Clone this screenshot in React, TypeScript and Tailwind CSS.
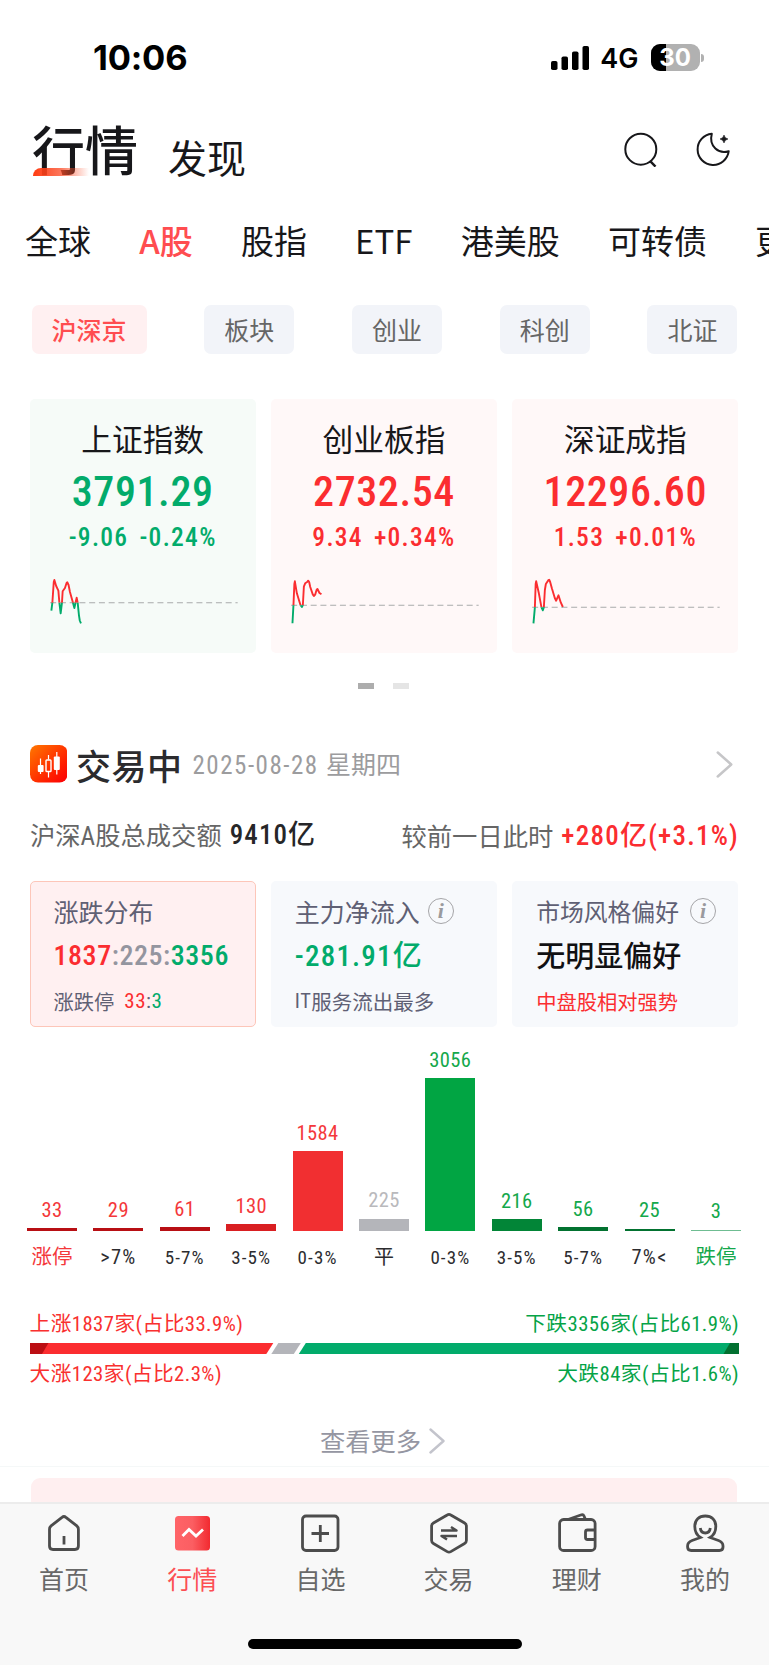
import React from 'react';
import clsx from 'clsx';

type Tone = 'up' | 'down';

const cjk = "font-['Noto_Sans_CJK_SC',sans-serif]";
const num = "font-['Roboto','Noto_Sans_CJK_SC',sans-serif] [font-stretch:87.5%]";

const marketTabs = ['全球', 'A股', '股指', 'ETF', '港美股', '可转债', '更多'];

const boards = ['沪深京', '板块', '创业', '科创', '北证'];

const indices: { name: string; value: string; change: string; percent: string; tone: Tone; base: number; points: string }[] = [
  {
    name: '上证指数',
    value: '3791.29',
    change: '-9.06',
    percent: '-0.24%',
    tone: 'down',
    base: 27.7,
    points:
      '21.2,35.7 22.2,27.7 23.6,7 24.2,5 26,11 28.2,15.7 29.2,27.7 30.5,38.3 31.8,27.7 32.5,16.3 34.8,13 36.4,8 37.2,7.3 38.4,10 39.8,17 42.8,27.7 44.2,33 46.5,22.7 47.5,27.7 48.8,40.3 49.6,45.5 50.8,48.3',
  },
  {
    name: '创业板指',
    value: '2732.54',
    change: '9.34',
    percent: '+0.34%',
    tone: 'up',
    base: 30.3,
    points:
      '21.3,48.3 22.3,30 23.2,9 23.7,6.3 25.7,18.3 29.3,30 30.7,32 31.7,30 32.7,11.7 34,8.3 36,7 37,5.7 38,7 39,11.7 41.6,19.4 42.7,21 44,19.6 45.4,15 46.3,14 48.3,18 50.3,19.3',
  },
  {
    name: '深证成指',
    value: '12296.60',
    change: '1.53',
    percent: '+0.01%',
    tone: 'up',
    base: 32.3,
    points:
      '21.3,48.3 22.7,32.7 23.5,9 24,6.3 26.7,18.3 29.3,32.3 30.7,35.3 31.7,32.3 32.7,15 33.7,9 36,5.4 37,4.7 38,7 39.7,13.3 42.7,23.3 44,25.7 46.3,20.3 48.7,27.7 50.7,32',
  },
];

const rangeLabel = 'text-[#2c2c2f] text-[19px] tracking-[1.1px]';
const edgeLabel = 'text-[#2c2c2f] text-[20.5px] tracking-[1.3px]';

const bars = [
  { count: 33, label: '涨停', height: 2.5, bar: 'bg-[#b80f14]', text: 'text-[#f4383b]', axis: 'text-[#f4383b] text-[20.5px]' },
  { count: 29, label: '>7%', height: 2.5, bar: 'bg-[#b80f14]', text: 'text-[#f4383b]', axis: edgeLabel },
  { count: 61, label: '5-7%', height: 3.5, bar: 'bg-[#b80f14]', text: 'text-[#f4383b]', axis: rangeLabel },
  { count: 130, label: '3-5%', height: 6.5, bar: 'bg-[#d91f22]', text: 'text-[#f4383b]', axis: rangeLabel },
  { count: 1584, label: '0-3%', height: 79.5, bar: 'bg-[#f12f31]', text: 'text-[#f4383b]', axis: rangeLabel },
  { count: 225, label: '平', height: 12, bar: 'bg-[#b4b5ba]', text: 'text-[#b9b9bc]', axis: 'text-[#2c2c2f] text-[20px]' },
  { count: 3056, label: '0-3%', height: 152.5, bar: 'bg-[#01a543]', text: 'text-[#14a84b]', axis: rangeLabel },
  { count: 216, label: '3-5%', height: 11.5, bar: 'bg-[#028537]', text: 'text-[#14a84b]', axis: rangeLabel },
  { count: 56, label: '5-7%', height: 3.5, bar: 'bg-[#027230]', text: 'text-[#14a84b]', axis: rangeLabel },
  { count: 25, label: '7%<', height: 1.8, bar: 'bg-[#027230]', text: 'text-[#14a84b]', axis: edgeLabel },
  { count: 3, label: '跌停', height: 1, bar: 'bg-[#6fbd92]', text: 'text-[#14a84b]', axis: 'text-[#14a84b] text-[20.5px]' },
];

const Sparkline: React.FC<{ id: string; base: number; points: string }> = ({ id, base, points }) => (
  <svg className="block w-full h-[52px]" viewBox="0 0 226 52" fill="none" strokeLinejoin="round">
    <clipPath id={`${id}-up`}>
      <rect x="0" y="0" width="226" height={base} />
    </clipPath>
    <clipPath id={`${id}-down`}>
      <rect x="0" y={base} width="226" height={52 - base} />
    </clipPath>
    <line x1="20" x2="207.5" y1={base} y2={base} stroke="#a9aaab" strokeWidth="1.1" strokeDasharray="6 3.75" />
    <polyline points={points} stroke="#fb2d30" strokeWidth="1.9" clipPath={`url(#${id}-up)`} />
    <polyline points={points} stroke="#02ab6b" strokeWidth="1.9" clipPath={`url(#${id}-down)`} />
  </svg>
);

const Chevron: React.FC<{ className?: string }> = ({ className }) => (
  <svg className={className} viewBox="0 0 16 26" fill="none" stroke="currentColor" strokeWidth="2.4" strokeLinecap="round" strokeLinejoin="round">
    <path d="M1.5 1.5 L14.5 13 L1.5 24.5" />
  </svg>
);

const InfoIcon: React.FC = () => (
  <span className="flex h-[26px] w-[26px] shrink-0 items-center justify-center rounded-full border-[1.3px] border-[#a5a5a8] font-['Liberation_Serif',serif] text-[22px] font-bold italic leading-none text-[#9a9a9e]">
    i
  </span>
);

const HomeIcon = () => (
  <>
    <path d="M6.5 17.2c0-1.4.6-2.4 1.6-3.3L19 5.3c1.2-1 2.7-1 3.9 0l10.9 8.6c1 .9 1.6 1.9 1.6 3.3V34c0 2.2-1.3 3.5-3.5 3.5H10c-2.2 0-3.5-1.3-3.5-3.5z" />
    <path d="M21 24v8.5" />
  </>
);

const QuotesIcon = () => (
  <>
    <defs>
      <linearGradient id="quotes" x1="0" x2="1" y1="0" y2="0">
        <stop offset="0" stopColor="#ff6468" />
        <stop offset=".5" stopColor="#fb5e62" />
        <stop offset="1" stopColor="#f22a30" />
      </linearGradient>
    </defs>
    <rect x="4" y="4" width="35" height="34.5" rx="3.5" fill="url(#quotes)" stroke="none" />
    <path d="M11.5 24 L18 17.5 L25 24 L32 17.5" stroke="#fff" />
  </>
);

const WatchIcon = () => (
  <>
    <rect x="3.5" y="4" width="35.5" height="34.5" rx="3.5" />
    <path d="M21.3 13v17M12.5 21.5h17.5" />
  </>
);

const TradeIcon = () => (
  <>
    <path d="M19.2 3 Q21 1.8 22.8 3 L36.6 11 Q38.4 12 38.4 14 V28.5 Q38.4 30.5 36.6 31.5 L22.8 39.6 Q21 40.6 19.2 39.6 L5.4 31.5 Q3.6 30.5 3.6 28.5 V14 Q3.6 12 5.4 11 Z" />
    <path d="M13 18.5H28.5L23 15M29 24H13.5L19 27.5" strokeLinejoin="round" strokeWidth="2.5" />
  </>
);

const WalletIcon = () => (
  <>
    <rect x="3.6" y="7.5" width="35.5" height="31" rx="4" />
    <path d="M12 7.5 L25.5 2.8 Q27.3 2.3 28 4 L29.5 7.5" />
    <path d="M39 18H31.5Q29.5 18 29.5 20V25.5Q29.5 27.5 31.5 27.5H39" />
  </>
);

const ProfileIcon = () => (
  <>
    <path d="M16.5 25.5C12.5 23 10.8 19.5 10.8 14.5 10.8 8 15 4 21.3 4S31.8 8 31.8 14.5C31.8 19.5 30.1 23 26.1 25.5L34.5 28.5C37.5 29.6 39 31.4 39 34V35C39 37.3 37.6 38.5 35.4 38.5H7.2C5 38.5 3.6 37.3 3.6 35V34C3.6 31.4 5.1 29.6 8.1 28.5Z" />
    <path d="M16.3 16c.4 3.3 2.2 5 5 5s4.6-1.7 5-5" />
  </>
);

const navItems = [
  { label: '首页', icon: HomeIcon },
  { label: '行情', icon: QuotesIcon, active: true },
  { label: '自选', icon: WatchIcon },
  { label: '交易', icon: TradeIcon },
  { label: '理财', icon: WalletIcon },
  { label: '我的', icon: ProfileIcon },
];

const StatusBar: React.FC = () => (
  <div className="flex h-[112px] items-center justify-between pl-[93px] pr-[65px] pt-[3px] font-['Inter',sans-serif]">
    <span className="mt-px text-[34.5px] font-bold leading-none tracking-[-0.2px] text-black">10:06</span>
    <div className="flex items-center text-black">
      <svg className="h-6 w-[39px]" viewBox="0 0 39 24" fill="currentColor">
        <rect x="0" y="15" width="6.5" height="9" rx="1.8" />
        <rect x="10.5" y="10.5" width="6.5" height="13.5" rx="1.8" />
        <rect x="21" y="5.5" width="6.5" height="18.5" rx="1.8" />
        <rect x="31.5" y="0" width="6.5" height="24" rx="1.8" />
      </svg>
      <span className="ml-[10px] mt-[2px] text-[27px] font-semibold leading-none">4G</span>
      <div className="relative ml-[12px] flex h-[27px] w-[49px] items-center justify-center overflow-hidden rounded-[9px] bg-[#b1b1b1]">
        <div className="absolute inset-y-0 left-0 w-[15px] bg-black" />
        <span className="relative text-[24px] font-bold leading-none text-white">30</span>
      </div>
      <div className="ml-[1.5px] h-2 w-[3px] rounded-r-full bg-[#b1b1b1]" />
    </div>
  </div>
);

const Header: React.FC = () => (
  <div className="flex h-[75px] items-start justify-between pl-[32px] pr-[38px]">
    <div className="flex items-end text-[#17171a]">
      <h1 className="relative text-[53px] font-medium leading-[73px]">
        行情
        <span className="absolute bottom-[9px] left-px h-2 w-[56px] rounded-tl-[8px] bg-gradient-to-r from-[#ff3b10] via-[#fb4a25]/75 to-[#ff5a36]/0" />
      </h1>
      <span className="ml-[30px] text-[39px] leading-[58px]">发现</span>
    </div>
    <div className="mt-[19px] flex gap-[36px] text-[#17171a]">
      <svg className="h-9 w-9" viewBox="0 0 36 36" fill="none" stroke="currentColor" strokeWidth="2">
        <circle cx="17.8" cy="18.2" r="15.5" />
        <path d="M27.2 30.2 L32.5 35.6" strokeWidth="2.4" />
      </svg>
      <svg className="h-9 w-9" viewBox="0 0 36 36" fill="none" stroke="currentColor" strokeWidth="2" strokeLinejoin="round">
        <path d="M16.8 2.8A15.6 15.6 0 1 0 33.7 20.2C24 23.5 13.5 15.5 16.8 2.8Z" />
        <path d="M29 4.2 Q29.6 7.4 32.8 8 Q29.6 8.6 29 11.8 Q28.4 8.6 25.2 8 Q28.4 7.4 29 4.2Z" fill="currentColor" strokeWidth=".8" />
      </svg>
    </div>
  </div>
);

const TurnoverRow: React.FC = () => (
  <div className="mt-[31px] flex h-[44px] items-center justify-between px-[30px] text-[25.3px] leading-none text-[#666]">
    <div className="flex items-center">
      <span>
        沪深<span className={num}>A</span>股总成交额
      </span>
      <span className={clsx(num, 'ml-[8px] text-[27px] font-medium tracking-[1.1px] text-[#262628]')}>9410亿</span>
    </div>
    <div className="flex items-center">
      <span>较前一日此时</span>
      <span className={clsx(num, 'ml-[8px] text-[27px] font-medium tracking-[1.25px] text-[#fb2d30]')}>+280亿(+3.1%)</span>
    </div>
  </div>
);

const StatCards: React.FC = () => (
  <div className="mt-[23px] grid grid-cols-3 gap-[15px] pl-[29.5px] pr-[30.5px] text-[#5f6074]">
    <div className="flex h-[146px] flex-col rounded-[5px] border border-[#fdc6b9] bg-[#fff0f1] pl-[23px]">
      <div className="mt-[13px] flex h-[32px] items-center text-[25px] leading-none">涨跌分布</div>
      <div className={clsx(num, 'mt-[13px] flex h-[32px] items-center text-[28px] font-medium leading-none tracking-[0.55px]')}>
        <span className="text-[#fb2d30]">1837</span>
        <span className="text-[#94959f]">:225:</span>
        <span className="text-[#02ab6b]">3356</span>
      </div>
      <div className="mt-[15px] flex h-[28px] items-center text-[20.3px] leading-none">
        涨跌停
        <span className={clsx(num, 'ml-[10px] text-[21px] tracking-[0.5px]')}>
          <span className="text-[#fb2d30]">33</span>:<span className="text-[#02ab6b]">3</span>
        </span>
      </div>
    </div>
    <div className="flex h-[146px] flex-col rounded-[5px] bg-[#f7f9fc] pl-[24px]">
      <div className="mt-[14px] flex h-[32px] items-center gap-[8px] text-[25px] leading-none">
        主力净流入
        <InfoIcon />
      </div>
      <div className={clsx(num, 'mt-[13px] flex h-[32px] items-center text-[29px] font-medium leading-none tracking-[1.2px] text-[#02ab6b]')}>-281.91亿</div>
      <div className="mt-[15px] flex h-[28px] items-center text-[20.5px] leading-none">
        <span className={clsx(num, 'tracking-[0.5px]')}>IT</span>服务流出最多
      </div>
    </div>
    <div className="flex h-[146px] flex-col rounded-[5px] bg-[#f7f9fc] pl-[24px]">
      <div className="mt-[14px] flex h-[32px] items-center gap-[11px] text-[23.8px] leading-none">
        市场风格偏好
        <InfoIcon />
      </div>
      <div className="mt-[11px] flex h-[32px] items-center text-[29px] font-medium leading-none text-[#111113]">无明显偏好</div>
      <div className="mt-[17px] flex h-[28px] items-center text-[20.3px] leading-none text-[#fb2d30]">中盘股相对强势</div>
    </div>
  </div>
);

const Distribution: React.FC = () => (
  <div className="flex h-[246px] justify-between pl-[27px] pr-[28px]">
    {bars.map((item, i) => (
      <div key={i} className={clsx(num, 'flex w-[50px] flex-col items-center whitespace-nowrap')}>
        <div className="flex h-[203.5px] w-full flex-col items-center justify-end">
          <span className={clsx('mb-[8px] text-[20.5px] leading-none tracking-[0.4px]', item.text)}>{item.count}</span>
          <div className={clsx('w-full', item.bar)} style={{ height: item.height }} />
        </div>
        <span className={clsx('mt-[10.5px] flex h-[32px] items-center leading-none', item.axis)}>{item.label}</span>
      </div>
    ))}
  </div>
);

const Breadth: React.FC = () => (
  <div className={clsx(num, 'mt-[37px] pl-[29.5px] pr-[30px] text-[20.7px] leading-none tracking-[0.45px]')}>
    <div className="flex h-[28px] items-center justify-between">
      <span className="text-[#f9302f]">上涨1837家(占比33.9%)</span>
      <span className="text-[#05a347]">下跌3356家(占比61.9%)</span>
    </div>
    <svg className="mt-[5px] block h-[11px] w-full" viewBox="0 0 710 11" preserveAspectRatio="none">
      <path d="M0 0H243.5L236.5 11H0Z" fill="#fb2d30" />
      <path d="M0 0H18.5L12 11H0Z" fill="#bb0e13" />
      <path d="M248.5 0H271L264 11H241.5Z" fill="#b4b5ba" />
      <path d="M276 0H710V11H269Z" fill="#02ab6b" />
      <path d="M700.5 0H710V11H694Z" fill="#027030" />
    </svg>
    <div className="mt-[6px] flex h-[28px] items-center justify-between">
      <span className="text-[#f9302f]">大涨123家(占比2.3%)</span>
      <span className="text-[#05a347]">大跌84家(占比1.6%)</span>
    </div>
  </div>
);

const BottomNav: React.FC = () => (
  <div className="mt-auto flex h-[163px] flex-col items-center border-t-2 border-[#ececec] bg-[#f8f8f8]">
    <div className="grid w-full grid-cols-6">
      {navItems.map((item) => (
        <div key={item.label} className="flex flex-col items-center">
          <svg className="mt-[8px] h-[42px] w-[42px]" viewBox="0 0 42 42" fill="none" stroke="#4c4c4c" strokeWidth="2.8">
            <item.icon />
          </svg>
          <span className={clsx('mt-[8px] flex h-[32px] items-center text-[25px] leading-none', item.active ? 'text-[#fc4f53]' : 'text-[#686868]')}>{item.label}</span>
        </div>
      ))}
    </div>
    <div className="mt-[45px] h-[10px] w-[274px] rounded-full bg-black" />
  </div>
);

export default function App() {
  return (
    <div className={clsx(cjk, 'flex h-[1665px] w-[769px] flex-col overflow-hidden bg-white *:shrink-0')}>
      <StatusBar />
      <Header />

      {/* Market tabs */}
      <div className="mt-[28px] flex h-[50px] items-center gap-[48.2px] whitespace-nowrap pl-[25px] text-[33px] leading-[50px] text-[#17171a]">
        {marketTabs.map((tab, i) => (
          <span key={tab} className={clsx('shrink-0', i === 1 && 'font-medium text-[#ff4d50]')}>
            {tab}
          </span>
        ))}
      </div>

      {/* Board filters */}
      <div className="mt-[40px] flex justify-between pl-[31.5px] pr-[31.5px]">
        {boards.map((board, i) => (
          <span
            key={board}
            className={clsx(
              'flex h-[49px] items-center rounded-[7px] px-[20px] text-[25px] leading-none',
              i === 0 ? 'bg-[#fff0f1] font-medium text-[#ff4d50]' : 'bg-[#f2f4f9] text-[#666]',
            )}
          >
            {board}
          </span>
        ))}
      </div>

      {/* Index cards */}
      <div className="mt-[45px] grid grid-cols-3 gap-[15px] pl-[29.5px] pr-[30.5px]">
        {indices.map((item, i) => (
          <div key={item.name} className={clsx('flex h-[254px] flex-col items-center rounded-[5px]', item.tone === 'up' ? 'bg-[#fff8f8]' : 'bg-[#f6fbf8]')}>
            <div className="mt-[19px] flex h-[40px] items-center text-[30.7px] leading-none text-[#17171a]">{item.name}</div>
            <div className={clsx(num, 'mt-[13px] flex h-[42px] items-center text-[42px] font-medium leading-none tracking-[0.6px]', item.tone === 'up' ? 'text-[#fb2d30]' : 'text-[#02ab6b]')}>
              {item.value}
            </div>
            <div className={clsx(num, 'mt-[10px] flex h-[30px] items-center gap-[11px] text-[25.5px] font-medium leading-none tracking-[1.3px]', item.tone === 'up' ? 'text-[#fb2d30]' : 'text-[#02ab6b]')}>
              <span>{item.change}</span>
              <span>{item.percent}</span>
            </div>
            <div className="mt-[22px] w-full">
              <Sparkline id={`spark-${i}`} base={item.base} points={item.points} />
            </div>
          </div>
        ))}
      </div>
      <div className="mt-[30px] flex justify-center gap-[19px] pr-[2px]">
        <div className="h-[6px] w-[16px] bg-[#adadad]" />
        <div className="h-[6px] w-[16px] bg-[#e5e5e5]" />
      </div>

      {/* Trading session */}
      <div className="mt-[56px] flex h-[38px] items-center pl-[29.5px] pr-[36px]">
        <svg className="h-[37.5px] w-[37.5px]" viewBox="0 0 37.5 37.5">
          <defs>
            <linearGradient id="session" x1="0" y1="0" x2="1" y2="1">
              <stop offset="0" stopColor="#ff7800" />
              <stop offset=".7" stopColor="#ff1d00" />
              <stop offset="1" stopColor="#fb0008" />
            </linearGradient>
          </defs>
          <rect width="37.5" height="37.5" rx="8" fill="url(#session)" />
          <path d="M10.5 13.5V29M18.5 10v4.5M18.5 26.5V32.5M26.8 7v22.5" stroke="#fff" strokeWidth="1.2" />
          <rect x="7.8" y="20" width="5.8" height="7" rx="1" fill="#fff" />
          <rect x="16" y="15" width="5" height="11.5" rx=".8" fill="none" stroke="#fff" strokeWidth="1.4" />
          <rect x="23.8" y="11.5" width="6" height="13.5" rx="1" fill="#fff" />
        </svg>
        <h2 className="ml-[9px] text-[35px] font-medium leading-none tracking-[0.5px] text-[#2b2b2e]">交易中</h2>
        <span className={clsx(num, 'ml-[10px] mt-[3px] text-[25px] leading-none text-[#9c9c9e]')}>
          <span className="tracking-[1.5px]">2025-08-28 </span>星期四
        </span>
        <Chevron className="ml-auto h-[27px] w-[17px] text-[#c6c6c8]" />
      </div>

      <TurnoverRow />
      <StatCards />
      <Distribution />
      <Breadth />

      <div className="mt-[36px] flex h-[34px] items-center justify-center gap-[8px] pr-[4px] text-[25.3px] leading-none text-[#9596a2]">
        查看更多
        <Chevron className="h-[26px] w-[16px] text-[#c3c4cc]" />
      </div>
      <div className="mt-[8px] border-t border-[#f5f8f8] pl-[31px] pr-[32px] pt-[11px]">
        <div className="h-[24px] rounded-t-[9px] bg-[#ffeff0]" />
      </div>

      <BottomNav />
    </div>
  );
}
